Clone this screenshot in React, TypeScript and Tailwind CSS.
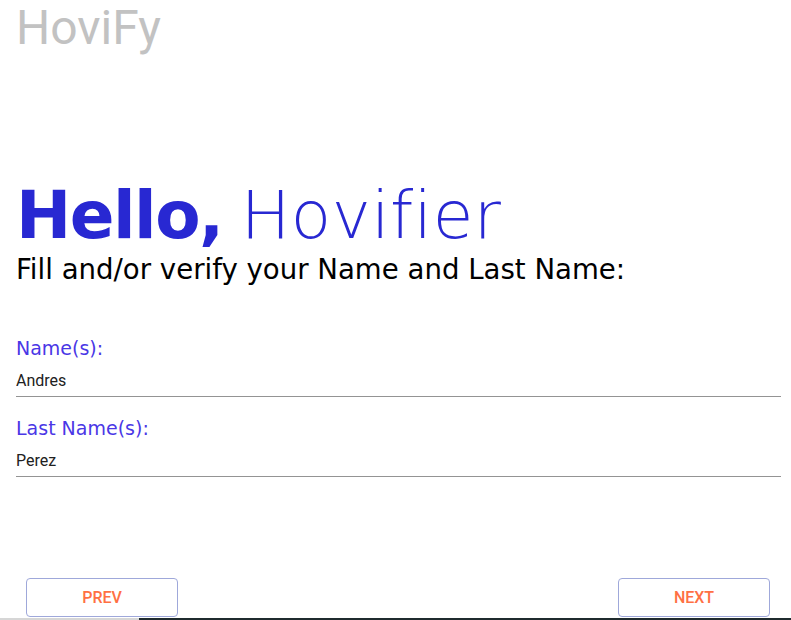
import React from "react";

const mont = { fontFamily: '"DejaVu Sans", "Open Sans", sans-serif' };
const roboto = { fontFamily: 'Roboto, "Liberation Sans", sans-serif' };

function Field({ label, value, top }: { label: string; value: string; top: string }) {
  return (
    <div className={`flex flex-col ${top}`}>
      <label
        className="text-[19px] leading-[22px] text-[#4a37e6] h-[22px] whitespace-nowrap"
        style={mont}
      >
        {label}
      </label>
      <input
        readOnly
        defaultValue={value}
        className="mt-[12px] h-[26px] pb-[6px] leading-[19px] text-[16px] text-[#212121] border-b border-[#949494] outline-none bg-transparent p-0"
        style={roboto}
      />
    </div>
  );
}

export default function App() {
  return (
    <div className="h-[620px] w-[791px] bg-white flex flex-col overflow-hidden">
      <div
        className="h-[56px] pl-[16px] text-[48px] leading-[56px] text-[#c2c2c2]"
        style={roboto}
      >
        HoviFy
      </div>

      <div className="pl-[16px] pr-[10px] flex flex-col">
        <h1
          className="mt-[121px] h-[77px] text-[66px] leading-[77px] text-[#2828d2] whitespace-nowrap"
          style={mont}
        >
          <span className="font-bold tracking-[-1.5px]">Hello,</span>
          <span className="ml-[18px] font-extralight tracking-[0.5px]">Hovifier</span>
        </h1>
        <p
          className="h-[32px] text-[27.6px] leading-[32px] text-black whitespace-nowrap"
          style={mont}
        >
          Fill and/or verify your Name and Last Name:
        </p>

        <Field label="Name(s):" value="Andres" top="mt-[51px]" />
        <Field label="Last Name(s):" value="Perez" top="mt-[20px]" />
      </div>

      <div className="flex-1" />

      <div className="flex justify-between pl-[26px] pr-[21px]">
        <button
          className="w-[152px] h-[39px] rounded-[4px] border border-[#9fa8da] bg-white text-[16px] font-medium text-[#ff7043]"
          style={roboto}
        >
          PREV
        </button>
        <button
          className="w-[152px] h-[39px] rounded-[4px] border border-[#9fa8da] bg-white text-[16px] font-medium text-[#ff7043]"
          style={roboto}
        >
          NEXT
        </button>
      </div>

      <div className="mt-[1px] h-[2px] flex">
        <div className="w-[139px] bg-[#d6d6d6]" />
        <div className="flex-1 bg-[#1f2b2e]" />
      </div>
    </div>
  );
}
